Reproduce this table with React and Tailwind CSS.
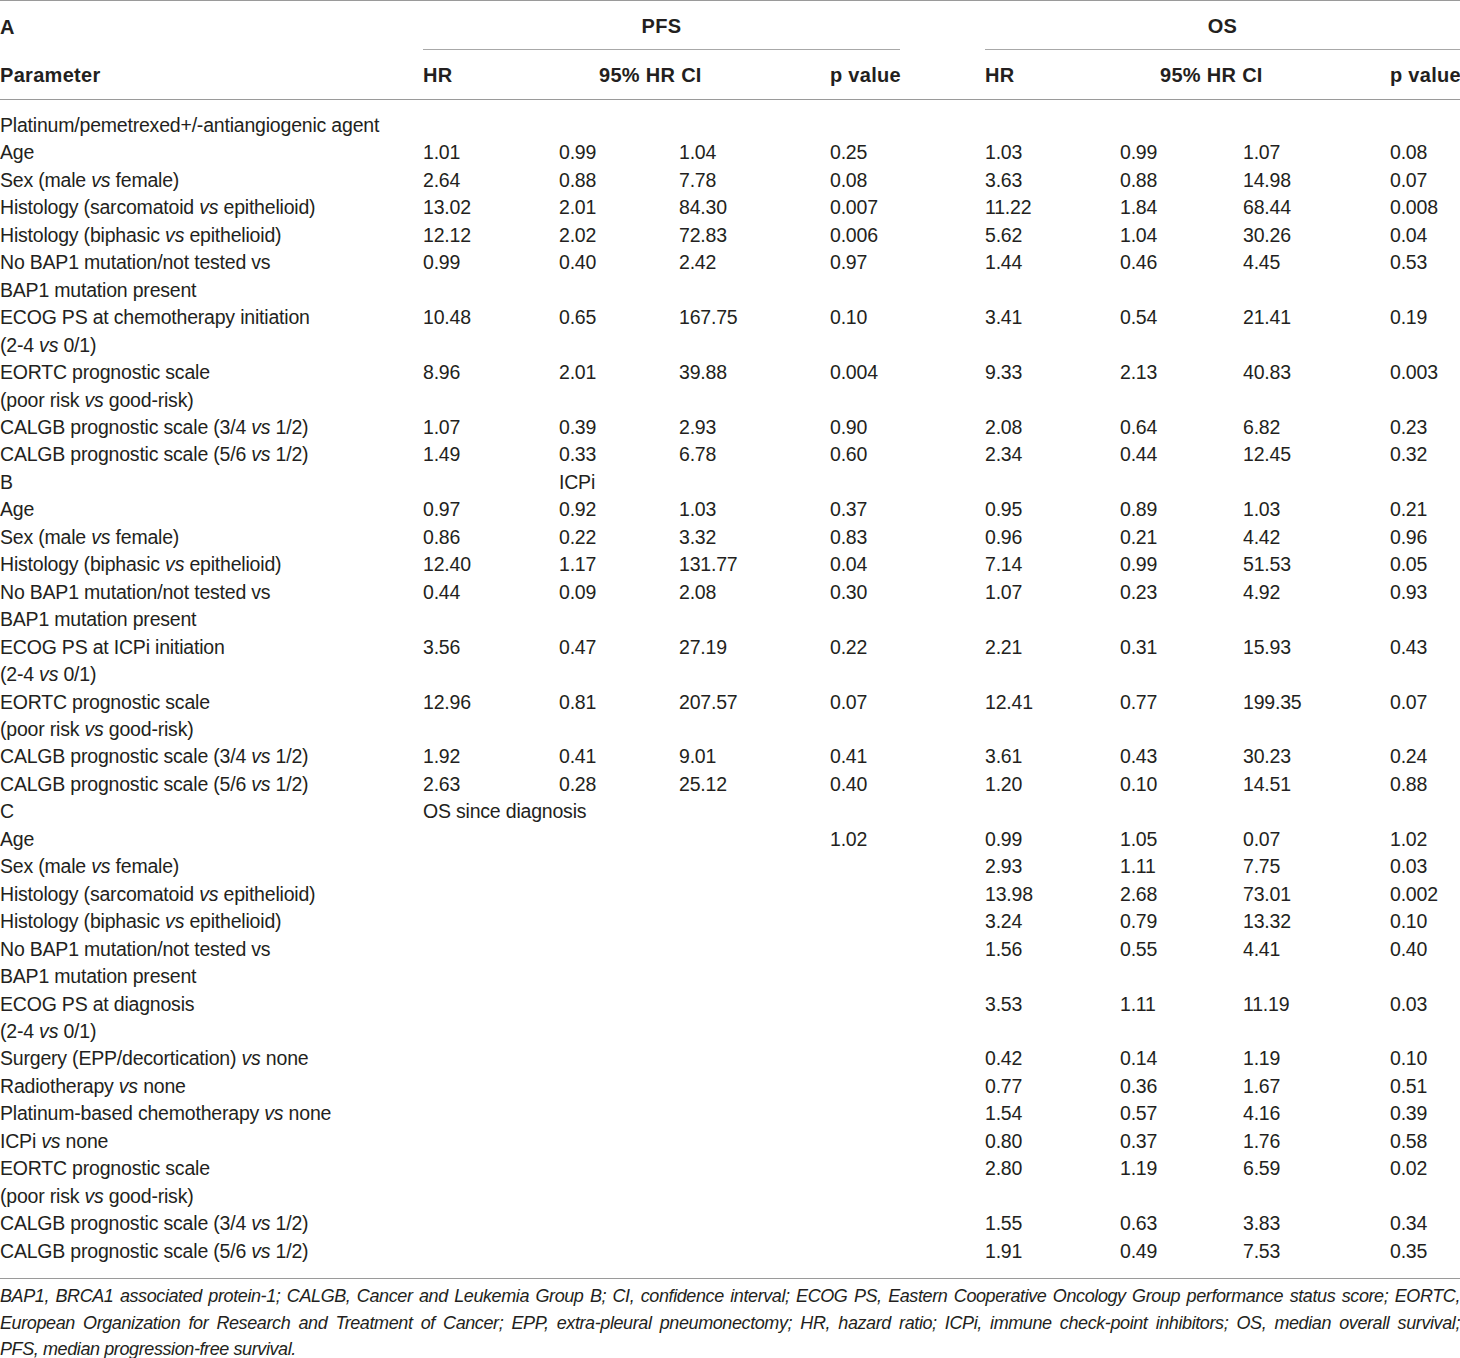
const cols = "grid grid-cols-[423px_136px_120px_151px_155px_135px_123px_147px_70px]";

// label text: segments wrapped in _ are italic
const Label = ({ text }) => (
  <span>
    {text.split("_").map((seg, i) =>
      i % 2 === 1 ? <i key={i}>{seg}</i> : <span key={i}>{seg}</span>
    )}
  </span>
);

const rows = [
  { label: ["Platinum/pemetrexed+/-antiangiogenic agent"], v: [] },
  { label: ["Age"], v: ["1.01", "0.99", "1.04", "0.25", "1.03", "0.99", "1.07", "0.08"] },
  { label: ["Sex (male _vs_ female)"], v: ["2.64", "0.88", "7.78", "0.08", "3.63", "0.88", "14.98", "0.07"] },
  { label: ["Histology (sarcomatoid _vs_ epithelioid)"], v: ["13.02", "2.01", "84.30", "0.007", "11.22", "1.84", "68.44", "0.008"] },
  { label: ["Histology (biphasic _vs_ epithelioid)"], v: ["12.12", "2.02", "72.83", "0.006", "5.62", "1.04", "30.26", "0.04"] },
  { label: ["No BAP1 mutation/not tested vs", "BAP1 mutation present"], v: ["0.99", "0.40", "2.42", "0.97", "1.44", "0.46", "4.45", "0.53"] },
  { label: ["ECOG PS at chemotherapy initiation", "(2-4 _vs_ 0/1)"], v: ["10.48", "0.65", "167.75", "0.10", "3.41", "0.54", "21.41", "0.19"] },
  { label: ["EORTC prognostic scale", "(poor risk _vs_ good-risk)"], v: ["8.96", "2.01", "39.88", "0.004", "9.33", "2.13", "40.83", "0.003"] },
  { label: ["CALGB prognostic scale (3/4 _vs_ 1/2)"], v: ["1.07", "0.39", "2.93", "0.90", "2.08", "0.64", "6.82", "0.23"] },
  { label: ["CALGB prognostic scale (5/6 _vs_ 1/2)"], v: ["1.49", "0.33", "6.78", "0.60", "2.34", "0.44", "12.45", "0.32"] },
  { label: ["B"], v: ["", "ICPi"] },
  { label: ["Age"], v: ["0.97", "0.92", "1.03", "0.37", "0.95", "0.89", "1.03", "0.21"] },
  { label: ["Sex (male _vs_ female)"], v: ["0.86", "0.22", "3.32", "0.83", "0.96", "0.21", "4.42", "0.96"] },
  { label: ["Histology (biphasic _vs_ epithelioid)"], v: ["12.40", "1.17", "131.77", "0.04", "7.14", "0.99", "51.53", "0.05"] },
  { label: ["No BAP1 mutation/not tested vs", "BAP1 mutation present"], v: ["0.44", "0.09", "2.08", "0.30", "1.07", "0.23", "4.92", "0.93"] },
  { label: ["ECOG PS at ICPi initiation", "(2-4 _vs_ 0/1)"], v: ["3.56", "0.47", "27.19", "0.22", "2.21", "0.31", "15.93", "0.43"] },
  { label: ["EORTC prognostic scale", "(poor risk _vs_ good-risk)"], v: ["12.96", "0.81", "207.57", "0.07", "12.41", "0.77", "199.35", "0.07"] },
  { label: ["CALGB prognostic scale (3/4 _vs_ 1/2)"], v: ["1.92", "0.41", "9.01", "0.41", "3.61", "0.43", "30.23", "0.24"] },
  { label: ["CALGB prognostic scale (5/6 _vs_ 1/2)"], v: ["2.63", "0.28", "25.12", "0.40", "1.20", "0.10", "14.51", "0.88"] },
  { label: ["C"], v: ["OS since diagnosis"] },
  { label: ["Age"], v: ["", "", "", "1.02", "0.99", "1.05", "0.07", "1.02"] },
  { label: ["Sex (male _vs_ female)"], v: ["", "", "", "", "2.93", "1.11", "7.75", "0.03"] },
  { label: ["Histology (sarcomatoid _vs_ epithelioid)"], v: ["", "", "", "", "13.98", "2.68", "73.01", "0.002"] },
  { label: ["Histology (biphasic _vs_ epithelioid)"], v: ["", "", "", "", "3.24", "0.79", "13.32", "0.10"] },
  { label: ["No BAP1 mutation/not tested vs", "BAP1 mutation present"], v: ["", "", "", "", "1.56", "0.55", "4.41", "0.40"] },
  { label: ["ECOG PS at diagnosis", "(2-4 _vs_ 0/1)"], v: ["", "", "", "", "3.53", "1.11", "11.19", "0.03"] },
  { label: ["Surgery (EPP/decortication) _vs_ none"], v: ["", "", "", "", "0.42", "0.14", "1.19", "0.10"] },
  { label: ["Radiotherapy _vs_ none"], v: ["", "", "", "", "0.77", "0.36", "1.67", "0.51"] },
  { label: ["Platinum-based chemotherapy _vs_ none"], v: ["", "", "", "", "1.54", "0.57", "4.16", "0.39"] },
  { label: ["ICPi _vs_ none"], v: ["", "", "", "", "0.80", "0.37", "1.76", "0.58"] },
  { label: ["EORTC prognostic scale", "(poor risk _vs_ good-risk)"], v: ["", "", "", "", "2.80", "1.19", "6.59", "0.02"] },
  { label: ["CALGB prognostic scale (3/4 _vs_ 1/2)"], v: ["", "", "", "", "1.55", "0.63", "3.83", "0.34"] },
  { label: ["CALGB prognostic scale (5/6 _vs_ 1/2)"], v: ["", "", "", "", "1.91", "0.49", "7.53", "0.35"] },
];

const notes = [
  "BAP1, BRCA1 associated protein-1; CALGB, Cancer and Leukemia Group B; CI, confidence interval; ECOG PS, Eastern Cooperative Oncology Group performance status score; EORTC,",
  "European Organization for Research and Treatment of Cancer; EPP, extra-pleural pneumonectomy; HR, hazard ratio; ICPi, immune check-point inhibitors; OS, median overall survival;",
];

export default function App() {
  return (
    <div className="w-[1460px] bg-white text-[#231f20] font-['Liberation_Sans',Arial,sans-serif]">
      <div className="border-t border-[#9a9a9a]">
        {/* group header */}
        <div className={`${cols} h-[49px] items-center text-[20px] tracking-[0.3px] font-bold`}>
          <div className="pt-[2px]">A</div>
          <div className="col-span-4 self-stretch flex">
            <div className="w-[477px] border-b border-[#a8a8a8] flex items-center justify-center pt-[2px]">PFS</div>
          </div>
          <div className="col-span-4 self-stretch flex">
            <div className="w-[475px] border-b border-[#a8a8a8] flex items-center justify-center pt-[2px]">OS</div>
          </div>
        </div>
        {/* column header */}
        <div className={`${cols} h-[50px] items-center pt-[1px] text-[20px] tracking-[0.3px] font-bold border-b border-[#9a9a9a]`}>
          <div>Parameter</div>
          <div>HR</div>
          <div className="col-span-2 pl-[40px]">95% HR CI</div>
          <div className="whitespace-nowrap">p value</div>
          <div>HR</div>
          <div className="col-span-2 pl-[40px]">95% HR CI</div>
          <div className="whitespace-nowrap">p value</div>
        </div>
      </div>

      <div className="pt-[12px] pb-[13px] border-b border-[#9a9a9a] text-[19.5px] leading-[27.45px] tracking-[-0.2px]">
        {rows.map((r, i) => (
          <div key={i} className={cols}>
            <div className="whitespace-nowrap">
              {r.label.map((l, j) => (
                <div key={j}>
                  <Label text={l} />
                </div>
              ))}
            </div>
            {r.v.map((val, k) => (
              <div key={k} className="whitespace-nowrap">{val}</div>
            ))}
          </div>
        ))}
      </div>

      <div className="pt-[4px] text-[18px] leading-[26.5px] italic tracking-[-0.4px]">
        {notes.map((n, i) => (
          <div key={i} className="text-justify [text-align-last:justify] whitespace-nowrap">
            {n}
          </div>
        ))}
        <div>PFS, median progression-free survival.</div>
      </div>
    </div>
  );
}
